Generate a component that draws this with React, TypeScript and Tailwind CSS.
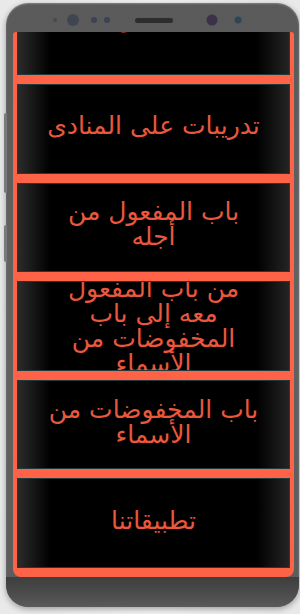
import React from "react";

const cards: string[][] = [
  ["المنادى"],
  ["تدريبات على المنادى"],
  ["باب المفعول من", "أجله"],
  ["من باب المفعول", "معه إلى باب", "المخفوضات من", "الأسماء"],
  ["باب المخفوضات من", "الأسماء"],
  ["تطبيقاتنا"],
];

const pads = ["pb-[20px]", "pb-[6px]", "pb-[6px]", "pb-0", "pb-[6px]", "pb-[6px]"];

function TopBar() {
  return (
    <svg width="292" height="29" viewBox="0 0 292 29" className="block">
      <circle cx="49" cy="17" r="2" fill="#434a58" />
      <circle cx="67" cy="17" r="6" fill="#3f4652" />
      <circle cx="88" cy="17" r="3" fill="#3d4354" />
      <circle cx="101" cy="17" r="3" fill="#3d4354" />
      <rect x="129" y="15" width="38" height="5" rx="2.5" fill="#2d2d2d" />
      <circle cx="206" cy="17" r="5.5" fill="#3b3148" />
      <circle cx="232" cy="17" r="3.5" fill="#2c4656" />
    </svg>
  );
}

export default function App() {
  return (
    <div className="w-[300px] h-[614px] bg-gradient-to-r from-[#e9e9e9] via-[#f4f4f4] to-[#e9e9e9] pt-[3px] pl-[6px] overflow-hidden">
      <div className="relative w-[293px] h-[604px] rounded-[22px] bg-gradient-to-b from-[#5a5a5a] via-[#626262] to-[#5c5c5c] shadow-[0_2px_6px_rgba(0,0,0,0.35),inset_0_1px_2px_rgba(255,255,255,0.25)] flex flex-col">
        <div className="absolute left-[-2px] top-[110px] w-[3px] h-[80px] rounded-l-[2px] bg-[#7a7a7a]" />
        <div className="absolute left-[-2px] top-[222px] w-[3px] h-[37px] rounded-l-[2px] bg-[#7a7a7a]" />
        <TopBar />
        <div className="ml-[7px] w-[281px] h-[545px] bg-[#ff6347] rounded-t-[3px] rounded-b-[8px] overflow-hidden px-[4px]">
          <div className="flex flex-col gap-[9px] -mt-[46.6px]">
            {cards.map((lines, i) => (
              <div
                key={i}
                dir="rtl"
                className={
                  "h-[89.6px] shrink-0 border border-[#1f3b3b] bg-[linear-gradient(to_right,#2b2b2b,#000_12%,#000_88%,#242424)] flex items-center justify-center overflow-hidden " +
                  pads[i]
                }
              >
                <div className="text-center text-[25px] leading-[25px] text-[#ea573c] font-['DejaVu_Sans',sans-serif]">
                  {lines.map((l, j) => (
                    <div key={j} className="whitespace-nowrap">{l}</div>
                  ))}
                </div>
              </div>
            ))}
          </div>
        </div>
        <div className="flex-1 rounded-b-[22px] bg-gradient-to-b from-[#3e3e3e] via-[#4a4a4a] to-[#5a5a5a]" />
      </div>
    </div>
  );
}
